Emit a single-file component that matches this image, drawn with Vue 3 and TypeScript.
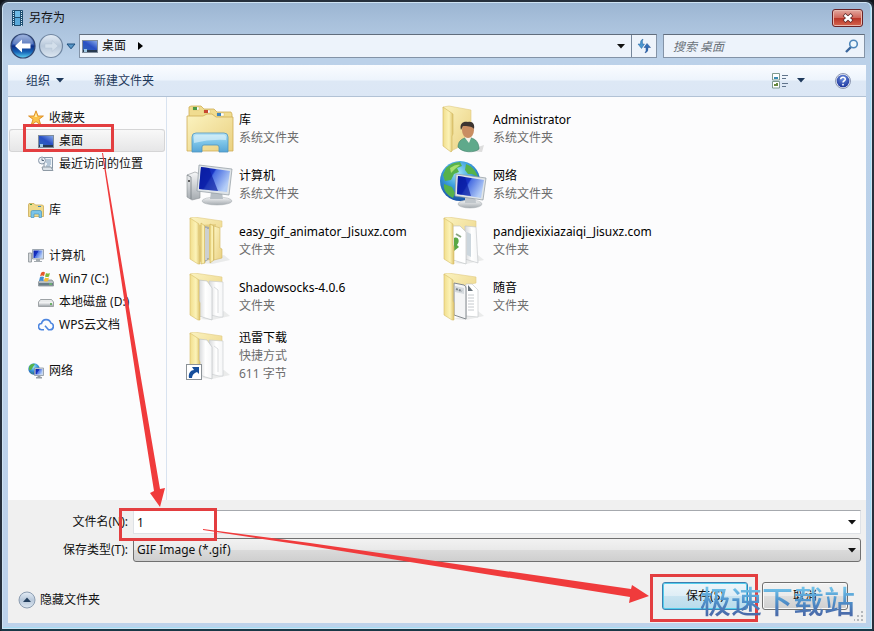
<script setup lang="ts">
import { ref } from 'vue'

interface NavItem {
  label: string
  icon: string
  selected?: boolean
}

interface NavGroup extends NavItem {
  children: NavItem[]
}

interface Entry {
  name: string
  icon: string
  details: string[]
}

const groups: NavGroup[] = [
  {
    label: '收藏夹',
    icon: 's-star',
    children: [
      { label: '桌面', icon: 's-desktop', selected: true },
      { label: '最近访问的位置', icon: 's-recent' },
    ],
  },
  { label: '库', icon: 's-library', children: [] },
  {
    label: '计算机',
    icon: 's-computer',
    children: [
      { label: 'Win7 (C:)', icon: 's-windrive' },
      { label: '本地磁盘 (D:)', icon: 's-drive' },
      { label: 'WPS云文档', icon: 's-cloud' },
    ],
  },
  { label: '网络', icon: 's-network', children: [] },
]

const entries: Entry[] = [
  { name: '库', icon: 'l-library', details: ['系统文件夹'] },
  { name: 'Administrator', icon: 'l-user', details: ['系统文件夹'] },
  { name: '计算机', icon: 'l-computer', details: ['系统文件夹'] },
  { name: '网络', icon: 'l-network', details: ['系统文件夹'] },
  { name: 'easy_gif_animator_Jisuxz.com', icon: 'l-nested', details: ['文件夹'] },
  { name: 'pandjiexixiazaiqi_Jisuxz.com', icon: 'l-green', details: ['文件夹'] },
  { name: 'Shadowsocks-4.0.6', icon: 'l-papers', details: ['文件夹'] },
  { name: '随音', icon: 'l-docs', details: ['文件夹'] },
  { name: '迅雷下载', icon: 'l-shortcut', details: ['快捷方式', '611 字节'] },
]

const fileName = ref('1')
const fileType = ref('gif')
const query = ref('')
</script>

<template>
  <div class="window">
    <svg class="sprite" aria-hidden="true">
      <defs>
        <linearGradient id="g-folder" x1="0" y1="0" x2="1" y2="1">
          <stop offset="0" stop-color="#fbf3c0" /><stop offset="1" stop-color="#ead080" />
        </linearGradient>
        <linearGradient id="g-flap" x1="0" y1="0" x2="1" y2="0">
          <stop offset="0" stop-color="#f1de8c" /><stop offset=".6" stop-color="#fcf3b8" /><stop offset="1" stop-color="#dcc26c" />
        </linearGradient>
        <linearGradient id="g-paper" x1="0" y1="0" x2="1" y2="0">
          <stop offset="0" stop-color="#d6d8da" /><stop offset=".5" stop-color="#ffffff" /><stop offset="1" stop-color="#f5f6f7" />
        </linearGradient>
        <linearGradient id="g-screen" x1="0" y1="0" x2="1" y2=".5">
          <stop offset="0" stop-color="#0a1ea8" /><stop offset=".45" stop-color="#1833c4" /><stop offset=".5" stop-color="#4a6fe2" /><stop offset="1" stop-color="#b4cdf7" />
        </linearGradient>
        <linearGradient id="g-desk" x1="0" y1="1" x2="1" y2="0">
          <stop offset="0" stop-color="#2f62b8" /><stop offset=".5" stop-color="#2a50c4" /><stop offset="1" stop-color="#86a8e8" />
        </linearGradient>
        <linearGradient id="g-clamp" x1="0" y1="0" x2="0" y2="1">
          <stop offset="0" stop-color="#b9e4f5" /><stop offset=".5" stop-color="#7cc4e8" /><stop offset="1" stop-color="#57a5d6" />
        </linearGradient>
        <linearGradient id="g-metal" x1="0" y1="0" x2="0" y2="1">
          <stop offset="0" stop-color="#f6f7f8" /><stop offset="1" stop-color="#a5abb0" />
        </linearGradient>
        <radialGradient id="g-globe" cx=".45" cy=".3" r=".75">
          <stop offset="0" stop-color="#9fe3fa" /><stop offset=".45" stop-color="#3c9fdd" /><stop offset="1" stop-color="#12479d" />
        </radialGradient>
        <linearGradient id="g-back" x1="0" y1="0" x2="0" y2="1">
          <stop offset="0" stop-color="#8ca6d8" /><stop offset=".45" stop-color="#2c54ac" /><stop offset=".5" stop-color="#0c2c86" /><stop offset=".75" stop-color="#1765b8" /><stop offset="1" stop-color="#5fd5f4" />
        </linearGradient>
        <linearGradient id="g-forward" x1="0" y1="0" x2="0" y2="1">
          <stop offset="0" stop-color="#e5edf6" /><stop offset=".5" stop-color="#b8c8da" /><stop offset="1" stop-color="#dde7f1" />
        </linearGradient>
        <radialGradient id="g-help" cx=".5" cy=".3" r=".7">
          <stop offset="0" stop-color="#6d8fe0" /><stop offset="1" stop-color="#1b359c" />
        </radialGradient>
      </defs>

      <symbol id="folder-back" viewBox="0 0 48 48">
        <path d="M14 46 38 38 44 43 26 47Z" fill="#dedfe0" opacity=".6" />
        <path d="M4 1 8 0 36 4V10L25 12 12 40Z" fill="url(#g-folder)" stroke="#e0cb84" stroke-width=".6" />
      </symbol>
      <symbol id="folder-flap" viewBox="0 0 48 48">
        <path d="M4 1 13 7V28L14 30V47H12L4 42Z" fill="url(#g-flap)" stroke="#d6bd68" stroke-width=".6" />
      </symbol>
      <symbol id="l-papers" viewBox="0 0 48 48">
        <use href="#folder-back" />
        <path d="M23 8 37 9V44L33 44 25 42Z" fill="url(#g-paper)" stroke="#c6c9cc" stroke-width=".6" />
        <path d="M13 7 21 8 26 15V47L13 43Z" fill="url(#g-paper)" stroke="#b9bdc0" stroke-width=".6" />
        <path d="M28 14 32 17V40" fill="none" stroke="#dadcde" />
        <use href="#folder-flap" />
      </symbol>
      <symbol id="l-nested" viewBox="0 0 48 48">
        <use href="#folder-back" />
        <path d="M13 8 30 7V42L13 45Z" fill="#e6d084" />
        <path d="M15 6 19 9V46L15 47Z" fill="url(#g-flap)" stroke="#cdb25c" stroke-width=".6" />
        <path d="M19 9 23 10V42L19 45Z" fill="#a5abad" /><path d="M20 11V43M22 12V41" stroke="#f2f4f4" />
        <path d="M24 7 28 9V43L24 46Z" fill="url(#g-flap)" stroke="#c9ac52" stroke-width=".6" />
        <path d="M28 9 34 11V31L36 32V41L28 43Z" fill="url(#g-folder)" stroke="#d0b661" stroke-width=".6" />
        <use href="#folder-flap" />
      </symbol>
      <symbol id="l-green" viewBox="0 0 48 48">
        <use href="#folder-back" />
        <path d="M25 9 36 10 38 46 25 42Z" fill="url(#g-paper)" stroke="#c0c3c6" stroke-width=".6" />
        <path d="M13 9 20 9 26 15V47L13 43Z" fill="#fff" stroke="#b9bdc0" stroke-width=".6" />
        <path d="M14 21C19 19 20 25 17 28L19 30 14 34Z" fill="#59a845" />
        <path d="M16 17 21 20" stroke="#8aa582" stroke-width="2" />
        <path d="M27 15 31 17V40L27 38Z" fill="#ccd6dd" />
        <use href="#folder-flap" />
      </symbol>
      <symbol id="l-docs" viewBox="0 0 48 48">
        <use href="#folder-back" />
        <path d="M26 11 32 11 38 17V44L26 43Z" fill="#fff" stroke="#c0c3c6" stroke-width=".6" />
        <path d="M28 12 33 18H28Z" fill="#68727a" />
        <path d="M28 22H34M28 25H34M28 28H34M28 31H34M28 34H34M28 37H34" stroke="#b7bdc2" stroke-width=".8" />
        <path d="M14 10 24 12Q26 13 26 15V46L14 42Z" fill="#f4f5f6" stroke="#83898e" />
        <path d="M15 13 24 15V21L15 19Z" fill="#d5dade" /><path d="M16 16 22 18" stroke="#7c858c" stroke-width="2" stroke-dasharray="2 1" />
        <use href="#folder-flap" />
      </symbol>
      <symbol id="l-shortcut" viewBox="0 0 48 48">
        <use href="#l-papers" />
        <rect x=".5" y="32.500" width="15" height="15" fill="#fff" stroke="#8b9297" />
        <path d="M3 46C2 41 5 38 8 38L6 35H13V42L11 40C8 41 6 43 6 46Z" fill="#174f9c" />
      </symbol>
      <symbol id="l-user" viewBox="0 0 48 48">
        <path d="M26 46 44 40 42 47Z" fill="#ddd" />
        <path d="M3 2 9 1 31 5V36L11 46Z" fill="url(#g-folder)" stroke="#e0cb84" stroke-width=".6" />
        <path d="M3 2 13 9V29L12 31V46L11 47 3 41Z" fill="url(#g-flap)" stroke="#d2b65c" stroke-width=".6" />
        <path d="M18 42C18 37 21 34 25 33H31C36 34 39 38 39 44 35 48 22 48 18 42Z" fill="#5fa98b" stroke="#40806a" stroke-width=".6" />
        <path d="M25 33 29 38 31 33 31 30H25Z" fill="#f6f3ea" />
        <ellipse cx="28" cy="25" rx="6" ry="8" fill="#c98d62" />
        <path d="M21 25C19 18 24 16 28 17 33 16 35 20 34 24 32 21 27 21 23 21Z" fill="#3c3431" />
      </symbol>
      <symbol id="l-library" viewBox="0 0 48 48">
        <path d="M3 12V2L5 1H15L18 4H28L31 7H45L46 9V20H3Z" fill="#f0dc90" stroke="#cfad55" stroke-width=".8" />
        <path d="M7 2H13V5H7ZM18 5H24V8H18ZM31 8H38V11H31Z" fill="#fff" stroke="#c7b06a" stroke-width=".4" />
        <path d="M7 2H11V5H7Z" fill="#4c9a45" /><path d="M18 5H22V8H18Z" fill="#c84731" /><path d="M31 8H35V11H31Z" fill="#3b83bf" />
        <path d="M1 11H17L21 9H26L30 12H47V46H1Z" fill="url(#g-folder)" stroke="#cfad55" stroke-width=".8" />
        <path d="M6 47V32Q6 28 10 28H38Q42 28 42 32V47H33V42Q33 40 31 40H18Q16 40 16 42V47Z" fill="url(#g-clamp)" stroke="#4e96bf" stroke-width=".8" />
        <path d="M8 38V32Q8 30 10 30H38Q40 30 40 32V35Q24 34 8 38Z" fill="#e2f5fb" opacity=".6" />
      </symbol>
      <symbol id="l-computer" viewBox="0 0 48 48">
        <path d="M1 14 9 11 14 13V37L6 39 1 36Z" fill="url(#g-metal)" stroke="#8b9196" stroke-width=".6" />
        <path d="M1 14 5 16V38" fill="none" stroke="#777f84" stroke-width=".8" /><circle cx="3" cy="20" r="1" fill="#333" />
        <ellipse cx="31" cy="40" rx="15" ry="4" fill="url(#g-metal)" stroke="#a6acb0" stroke-width=".5" />
        <path d="M25 31H36L37 38H24Z" fill="#b8bfc5" />
        <path d="M13 4 46 8 43 34 11 30Z" fill="#dfe4e8" stroke="#8e989f" stroke-width=".7" />
        <path d="M15 6 44 10 41 31 13 28Z" fill="url(#g-screen)" />
        <path d="M15 6 23 7 32 30 13 28Z" fill="#081a9e" opacity=".65" />
      </symbol>
      <symbol id="l-network" viewBox="0 0 48 48">
        <circle cx="20" cy="20" r="20" fill="url(#g-globe)" />
        <path d="M6 7C10 3 15 1 20 1L22 5 17 7 19 11 14 13 11 19 5 20 3 14ZM26 3C32 5 36 10 38 16L32 13 28 13 25 9ZM4 23 12 26 15 32 13 37C7 34 3 29 4 23Z" fill="#56b24a" />
        <path d="M10 7C14 4 18 3 20 4L15 8 11 12Z" fill="#a6df70" />
        <ellipse cx="30" cy="43" rx="12" ry="4" fill="url(#g-metal)" stroke="#a6acb0" stroke-width=".5" />
        <path d="M25 34H35L36 42H25Z" fill="#c0c6cb" />
        <path d="M16 13 46 17 43 39 15 35Z" fill="#dfe4e8" stroke="#8e989f" stroke-width=".7" />
        <path d="M18 15 44 19 41 37 17 33Z" fill="url(#g-screen)" />
        <path d="M18 15 25 16 31 35 17 33Z" fill="#081a9e" opacity=".65" />
      </symbol>

      <symbol id="s-star" viewBox="0 0 16 16">
        <path d="M8 .8 10 6H15.400L11 9.300 12.800 15 8 11.600 3.200 15 5 9.300.6 6H6Z" fill="#fbc24b" stroke="#dc8a1d" stroke-width=".9" />
        <path d="M8 3 9.200 7H6.500Z" fill="#fff0b0" />
      </symbol>
      <symbol id="s-desktop" viewBox="0 0 16 16">
        <rect x=".5" y="2.500" width="15" height="12" fill="#d4dce5" stroke="#7f8c9b" />
        <rect x="1" y="3" width="14" height="9" fill="url(#g-desk)" /><path d="M1 12H15V14H1Z" fill="#27394f" /><path d="M2 11H5V14H2Z" fill="#9ec9e5" />
      </symbol>
      <symbol id="s-recent" viewBox="0 0 16 16">
        <path d="M6 1.500H14.500V12.500H6Z" fill="#eef3f7" stroke="#8696a6" /><path d="M8 4H13M8 6H13M9 8H13M8 10H12" stroke="#7d9bb9" />
        <path d="M4 11H13L15 14.500H5Z" fill="#dbe2e8" stroke="#8e9aa5" />
        <circle cx="4" cy="4.500" r="3.500" fill="#e9eff5" stroke="#8797a8" /><path d="M4 2.500V4.500H6" fill="none" stroke="#55697e" />
      </symbol>
      <symbol id="s-library" viewBox="0 0 16 16">
        <path d="M.5 3 1 1.500H6L7.500 3H14.500L15.500 4V14.500H.5Z" fill="#f0da8b" stroke="#c9aa56" stroke-width=".8" />
        <path d="M2 2H4V3H2Z" fill="#4c9a45" /><path d="M10 4H13V5H10Z" fill="#3b83bf" />
        <path d="M3 15.500V10Q3 8.500 4.500 8.500H12Q13.500 8.500 13.500 10V15.500H11V12H6V15.500Z" fill="#7cc4e8" stroke="#4795c0" stroke-width=".7" />
      </symbol>
      <symbol id="s-computer" viewBox="0 0 16 16">
        <path d="M.5 5H3.500V14H.5Z" fill="#d2d6d9" stroke="#8a9095" stroke-width=".8" />
        <path d="M4.500 1.500H15.500V11H4.500Z" fill="#dce2e7" stroke="#8993a0" stroke-width=".8" /><rect x="5.500" y="2.500" width="9" height="7.500" fill="url(#g-screen)" />
        <path d="M8 11H12V13H14V14H6V13H8Z" fill="#a4abb0" />
      </symbol>
      <symbol id="s-windrive" viewBox="0 0 16 16">
        <path d="M2 9H14L15.500 11V15H.5V11Z" fill="#b7bec4" stroke="#7a8288" stroke-width=".7" /><path d="M1 12H15V14.500H1Z" fill="#6b7f88" /><path d="M11 13H14" stroke="#6fdb5e" />
        <path d="M3 2Q5 0 7 1.500L6 5Q4 4 2 5.500Z" fill="#e5582b" /><path d="M8 2Q10 3 12 2L11 5.500Q9 6.500 7 5.500Z" fill="#7dbb3c" />
        <path d="M2 6Q4 5 6 6L5 10Q3 9 1 10Z" fill="#3f8fd6" /><path d="M7 6.500Q9 7.500 11 6.500L10 10Q8 11 6 10Z" fill="#f5bf33" />
      </symbol>
      <symbol id="s-drive" viewBox="0 0 16 16">
        <path d="M2.500 5.500H13.500L15.500 8V12.500H.5V8Z" fill="#e9ebec" stroke="#888e92" stroke-width=".8" /><path d="M1 8.500H15V12H1Z" fill="url(#g-metal)" /><path d="M12 10H14" stroke="#4aa342" stroke-width="1.500" />
      </symbol>
      <symbol id="s-cloud" viewBox="0 0 16 16">
        <path d="M6 12.700H3.800A3 3 0 0 1 3.500 6.500 4.800 4.800 0 0 1 12.800 6 3.400 3.400 0 0 1 12 12.700H10.500L7 8.800" fill="none" stroke="#4d86e0" stroke-width="1.600" stroke-linejoin="round" />
      </symbol>
      <symbol id="s-network" viewBox="0 0 16 16">
        <circle cx="6" cy="6" r="5.700" fill="url(#g-globe)" /><path d="M1 4Q3 0 7 1L5 4 3 7 1 7ZM2 9 5 10V11Z" fill="#56b24a" />
        <path d="M6.500 5H15.500V12.500H6.500Z" fill="#dce2e7" stroke="#8993a0" stroke-width=".8" /><rect x="7.500" y="6" width="7" height="5.500" fill="url(#g-screen)" />
        <path d="M9.500 13H12.500V14H14V15.500H8V14H9.500Z" fill="#969da3" />
      </symbol>
      <symbol id="s-down" viewBox="0 0 8 5"><path d="M0 0H8L4 4.500Z" fill="currentColor" /></symbol>
    </svg>

    <header class="titlebar">
      <svg class="film" viewBox="0 0 11 16" aria-hidden="true">
        <rect width="11" height="16" rx="1" fill="#1e4d70" /><rect x="3" y="1" width="5" height="6" fill="#6fbbe6" /><rect x="3" y="8" width="5" height="7" fill="#59a9da" />
        <path d="M1.500 1V16M9.500 1V16" stroke="#d4ecf8" stroke-width="1" stroke-dasharray="1 1" />
      </svg>
      <h1>另存为</h1>
      <button class="close" type="button" aria-label="关闭">
        <svg viewBox="0 0 12 10" aria-hidden="true"><path d="M2 1.500 10 8.500M10 1.500 2 8.500" stroke="#5d2a29" stroke-width="4" /><path d="M2.500 2 9.500 8M9.500 2 2.500 8" stroke="#fff" stroke-width="2.400" /></svg>
      </button>
    </header>

    <nav class="navbar" aria-label="位置">
      <button class="round" type="button" aria-label="后退">
        <svg viewBox="0 0 26 26" aria-hidden="true"><circle cx="13" cy="13" r="12" fill="url(#g-back)" stroke="#30446f" stroke-width="1.200" /><path d="M3 11A10 9 0 0 1 23 11Q13 14 3 11Z" fill="#fff" opacity=".22" /><path d="M5 13 12 6.500V10.500H20.500V15.500H12V19.500Z" fill="#fff" /></svg>
      </button>
      <button class="round" type="button" aria-label="前进">
        <svg viewBox="0 0 26 26" aria-hidden="true"><circle cx="13" cy="13" r="11.500" fill="url(#g-forward)" stroke="#7187a2" stroke-width="1.200" /><path d="M20 13 14 7.500V11H7V15H14V18.500Z" fill="#d3dfeb" stroke="#b6c5d5" stroke-width=".5" /></svg>
      </button>
      <button class="recent" type="button" aria-label="最近的位置">
        <svg viewBox="0 0 10 7" aria-hidden="true"><path d="M1 1H9L5 5.800Z" fill="#5796c8" stroke="#1c4e7c" /></svg>
      </button>
      <div class="address">
        <svg class="icon" aria-hidden="true"><use href="#s-desktop" /></svg>
        <a href="#desktop">桌面</a>
        <svg class="crumb" viewBox="0 0 5 8" aria-hidden="true"><path d="M0 0 5 4 0 8Z" /></svg>
        <button class="drop" type="button" aria-label="以前的位置"><svg class="down" aria-hidden="true"><use href="#s-down" /></svg></button>
        <button class="refresh" type="button" aria-label="刷新">
          <svg viewBox="0 0 16 16" aria-hidden="true"><path d="M7 1Q4 2 4.500 6H2L5.500 10.500 8.500 6H6.500Q6 3 7 1Z" fill="#4b98d2" stroke="#28649f" stroke-width=".5" /><path d="M9 15Q12.500 14 12 9.500H14.500L11 5.500 8 9.500H10Q10.500 13 9 15Z" fill="#336fb7" stroke="#244f90" stroke-width=".5" /></svg>
        </button>
      </div>
      <label class="search">
        <input v-model="query" type="search" placeholder="搜索 桌面" aria-label="搜索 桌面" />
        <svg viewBox="0 0 14 14" aria-hidden="true"><path d="M1 13 6 8" stroke="#3a659c" stroke-width="2.400" /><circle cx="8.500" cy="5" r="3.800" fill="#eef7fd" stroke="#4f87bb" stroke-width="1.600" /></svg>
      </label>
    </nav>

    <div class="toolbar">
      <button type="button">组织 <svg class="down" aria-hidden="true"><use href="#s-down" /></svg></button>
      <button type="button">新建文件夹</button>
      <button class="view" type="button" aria-label="更改视图">
        <svg class="icon" viewBox="0 0 16 16" aria-hidden="true"><path d="M.5.5H7.500V7H.5ZM.5 8.500H7.500V15H.5Z" fill="#fff" stroke="#7f9a8e" /><path d="M2 4H6V6H2Z" fill="#388bb2" /><path d="M2 11H4V10H6V13H2Z" fill="#67883c" /><path d="M10 2.500H16M10 5.500H14M10 10.500H16M10 13.500H14" stroke="#60748c" /></svg>
        <svg class="down" aria-hidden="true"><use href="#s-down" /></svg>
      </button>
      <button class="help" type="button" aria-label="帮助">
        <svg viewBox="0 0 16 16" aria-hidden="true"><circle cx="8" cy="8" r="7.500" fill="#e4eaf5" stroke="#7783a0" stroke-width=".8" /><circle cx="8" cy="8" r="6.300" fill="url(#g-help)" /><path d="M5.700 6.300Q5.800 4.200 8 4.200T10.300 6.200Q10.300 7.200 9 8 8 8.600 8 9.600" fill="none" stroke="#fff" stroke-width="1.500" /><circle cx="8" cy="11.700" r=".9" fill="#fff" /></svg>
      </button>
    </div>

    <main class="browser">
      <aside class="sidebar" aria-label="导航窗格">
        <ul v-for="group in groups" :key="group.label">
          <li><a href="#"><svg class="icon" aria-hidden="true"><use :href="`#${group.icon}`" /></svg>{{ group.label }}</a></li>
          <li v-for="item in group.children" :key="item.label" class="child">
            <a href="#" :class="{ selected: item.selected }"><svg class="icon" aria-hidden="true"><use :href="`#${item.icon}`" /></svg>{{ item.label }}</a>
          </li>
        </ul>
      </aside>
      <ul class="files">
        <li v-for="entry in entries" :key="entry.name">
          <svg class="thumb" aria-hidden="true"><use :href="`#${entry.icon}`" /></svg>
          <div>
            <p class="name">{{ entry.name }}</p>
            <p v-for="detail in entry.details" :key="detail">{{ detail }}</p>
          </div>
        </li>
      </ul>
    </main>

    <form class="footer" @submit.prevent>
      <div class="fields">
        <label for="file-name">文件名(N):</label>
        <div class="combo">
          <input id="file-name" v-model="fileName" type="text" />
          <button type="button" aria-label="以前的文件名"><svg class="down" aria-hidden="true"><use href="#s-down" /></svg></button>
        </div>
        <label for="file-type">保存类型(T):</label>
        <div class="picker">
          <select id="file-type" v-model="fileType"><option value="gif">GIF Image (*.gif)</option></select>
          <svg class="down" aria-hidden="true"><use href="#s-down" /></svg>
        </div>
      </div>
      <div class="actions">
        <button class="hide" type="button">
          <svg viewBox="0 0 18 18" aria-hidden="true"><circle cx="9" cy="9" r="8" fill="url(#g-forward)" stroke="#8c9db1" /><path d="M5 11H13L9 6.500Z" fill="#24405e" /></svg>
          隐藏文件夹
        </button>
        <button class="push primary" type="submit">保存(S)</button>
        <button class="push" type="button">取消</button>
      </div>
      <svg class="grip" viewBox="0 0 10 10" aria-hidden="true"><path d="M7 0H9V2H7ZM7 4H9V6H7ZM7 8H9V10H7ZM3 4H5V6H3ZM3 8H5V10H3ZM-1 8H1V10H-1Z" fill="#b5b8bc" /></svg>
    </form>

    <svg class="marks" viewBox="0 0 874 631" preserveAspectRatio="none" aria-hidden="true">
      <g fill="none" stroke="#e33e40" stroke-width="3">
        <rect x="24.500" y="125.500" width="88" height="25" /><rect x="120.500" y="509.500" width="95" height="30" /><rect x="651.500" y="575.500" width="105" height="45" />
      </g>
      <g fill="#f03b3c">
        <path d="M102 153 103 153 142 384 160 489 165 488 160 507 150 493 154 491 137 384Z" />
        <path d="M203 529 310 543 631 589 632 585 649 596 629 603 630 597 310 546 203 530Z" />
      </g>
    </svg>
    <div class="watermark">极速下载站</div>
  </div>
</template>

<style>
body {
  margin: 0;
  background: #10151c;
}
</style>

<style scoped>
.window {
  position: relative;
  box-sizing: border-box;
  display: flex;
  flex-direction: column;
  min-height: 100vh;
  padding: 0 6px 6px;
  border: 2px solid #26303c;
  border-bottom-color: #193847;
  border-radius: 8px 8px 2px 2px;
  background: linear-gradient(#9bb5d2 0, #a8c0db 20px, #bbd1e9 56px, #bdd2eb 100%);
  box-shadow: inset 0 0 0 1px #cfe3f3, inset -1px -1px 0 1px #a3dcf3;
  color: #111;
  font: 12px/18px "Noto Sans", "Noto Sans CJK SC", sans-serif;
}

.sprite {
  position: absolute;
  width: 0;
  height: 0;
}

button,
input,
select {
  box-sizing: border-box;
  margin: 0;
  padding: 0;
  border: 0;
  outline: 0;
  background: none;
  color: inherit;
  font: inherit;
}

a {
  color: inherit;
  text-decoration: none;
}

ul,
p,
h1 {
  margin: 0;
  padding: 0;
  font: inherit;
  list-style: none;
}

svg {
  flex: none;
  display: block;
}

.icon {
  width: 16px;
  height: 16px;
}

.down {
  width: 8px;
  height: 5px;
}

.titlebar {
  display: flex;
  align-items: center;
  gap: 6px;
  height: 31px;
  padding: 0 3px 0 4px;
}

.film {
  width: 11px;
  height: 16px;
}

.close {
  display: grid;
  place-items: center;
  width: 31px;
  height: 18px;
  margin-left: auto;
  border: 1px solid #6b2327;
  border-radius: 3px;
  background: linear-gradient(#e3a99f, #d0665a 48%, #b93527 52%, #d5664f);
  box-shadow: inset 0 0 0 1px #e9b7ad;
}

.close svg {
  width: 12px;
  height: 10px;
}

.navbar {
  display: flex;
  align-items: center;
  height: 26px;
  padding: 0 1px 6px 2px;
}

.round,
.round svg {
  width: 26px;
  height: 26px;
}

.round {
  margin-right: 2px;
  border-radius: 50%;
}

.recent {
  width: 10px;
  margin-right: 3px;
}

.recent svg {
  width: 10px;
  height: 7px;
}

.address,
.search {
  display: flex;
  align-items: center;
  box-sizing: border-box;
  height: 24px;
  border: 1px solid #8393a7;
  border-top-color: #616d7d;
  background: #edf3fb;
}

.address {
  flex: 1;
  padding-left: 2px;
}

.address a {
  margin: 0 12px 0 4px;
}

.crumb {
  width: 5px;
  height: 8px;
}

.drop {
  display: grid;
  place-items: center;
  width: 20px;
  height: 22px;
  margin-left: auto;
}

.refresh {
  display: grid;
  place-items: center;
  width: 25px;
  height: 22px;
  border-left: 1px solid #75869b;
}

.refresh svg {
  width: 16px;
  height: 16px;
}

.search {
  width: 202px;
  margin-left: 6px;
  padding: 0 5px 0 9px;
}

.search input {
  flex: 1;
  min-width: 0;
  height: 22px;
  appearance: none;
  font-style: italic;
}

.search input::placeholder {
  color: #6c737b;
}

.search svg {
  width: 14px;
  height: 14px;
}

.toolbar {
  display: flex;
  align-items: center;
  box-sizing: border-box;
  height: 32px;
  padding: 0 15px 0 18px;
  border-bottom: 1px solid #b2c2d5;
  background: linear-gradient(#fafcff, #edf4fc 48%, #dde8f5 52%, #dce7f5);
  color: #1e395b;
}

.toolbar button {
  display: flex;
  align-items: center;
  gap: 6px;
  margin-right: 30px;
}

.toolbar .view {
  gap: 9px;
  margin-left: auto;
}

.toolbar .help {
  margin-right: 0;
}

.help svg {
  width: 16px;
  height: 16px;
}

.browser {
  flex: 1;
  display: flex;
  background: #fcfcfd;
}

.sidebar {
  box-sizing: border-box;
  width: 159px;
  padding: 9px 1px 0;
  border-right: 1px solid #d9e3f0;
}

.sidebar ul {
  margin-bottom: 23px;
}

.sidebar a {
  display: flex;
  align-items: center;
  gap: 5px;
  box-sizing: border-box;
  height: 23px;
  padding-left: 19px;
  border: 1px solid transparent;
  border-width: 1px 0;
  white-space: nowrap;
}

.sidebar .child a {
  padding-left: 29px;
}

.sidebar .selected {
  border: 1px solid #d5d5d6;
  border-width: 1px 0;
  border-radius: 3px;
  background: linear-gradient(#f8f8f8, #e6e6e7);
  box-shadow: inset -1px 0 #d5d5d6, inset 1px 0 #d5d5d6;
}

.files {
  flex: 1;
  display: grid;
  grid-template-columns: repeat(auto-fill, 254px);
  align-content: start;
  padding: 4px 0 0 19px;
}

.files li {
  display: flex;
  align-items: center;
  gap: 5px;
  box-sizing: border-box;
  min-height: 56px;
  padding: 4px 0;
  color: #6d6d6d;
}

.files .name {
  color: #000;
}

.thumb {
  width: 48px;
  height: 48px;
}

.footer {
  position: relative;
  padding: 10px 5px 13px 0;
  background: #f0f0f0;
}

.fields {
  display: grid;
  grid-template-columns: 120px 1fr;
  gap: 4px 5px;
  align-items: center;
}

.fields label {
  text-align: right;
}

.combo,
.picker {
  display: flex;
  align-items: center;
  box-sizing: border-box;
  height: 24px;
  border: 1px solid #dfe2e6;
  border-top-color: #a6a9ae;
  background: #fff;
}

.combo input {
  flex: 1;
  min-width: 0;
  height: 22px;
  padding-left: 3px;
}

.combo button {
  display: grid;
  place-items: center;
  width: 16px;
  height: 22px;
}

.picker {
  position: relative;
  border: 1px solid #707070;
  border-radius: 3px;
  background: linear-gradient(#f2f2f2, #e9e9e9 48%, #dadada 52%, #cfcfcf);
}

.picker select {
  width: 100%;
  height: 22px;
  padding-left: 3px;
  appearance: none;
}

.picker .down {
  position: absolute;
  right: 4px;
  pointer-events: none;
}

.actions {
  display: flex;
  align-items: center;
  gap: 14px;
  margin-top: 20px;
  padding: 0 13px 0 10px;
}

.hide {
  display: flex;
  align-items: center;
  gap: 4px;
  height: 28px;
  margin: 4px auto -4px 0;
}

.hide svg {
  width: 18px;
  height: 18px;
}

.push {
  width: 86px;
  height: 28px;
  border: 1px solid #707070;
  border-radius: 3px;
  background: linear-gradient(#f3f3f3, #ebebeb 48%, #dddddd 52%, #cfcfcf);
  box-shadow: inset 0 0 0 1px #fafafa;
}

.primary {
  border-color: #3c7fb1;
  background: linear-gradient(#eef6fa, #dfeef6 48%, #c8e3f0 52%, #b8dcec);
  box-shadow: inset 0 0 0 1px #53cdec;
}

.grip {
  position: absolute;
  right: 2px;
  bottom: 2px;
  width: 10px;
  height: 10px;
}

.marks {
  position: absolute;
  inset: -2px;
  width: calc(100% + 4px);
  height: calc(100% + 4px);
  pointer-events: none;
}

.watermark {
  position: absolute;
  right: 17px;
  bottom: 10px;
  background: linear-gradient(#6fc0e8 15%, #4f92cc 50%, #4a6cab 85%);
  background-clip: text;
  color: transparent;
  font-size: 31px;
  font-weight: 500;
  line-height: 36px;
  pointer-events: none;
}
</style>
